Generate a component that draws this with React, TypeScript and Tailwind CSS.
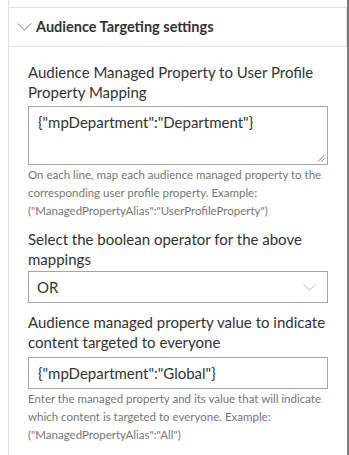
const font = { fontFamily: 'Lato, "Open Sans", sans-serif' }

function Chevron({ className }: { className?: string }) {
  return (
    <svg viewBox="0 0 16 9" className={className} fill="none" stroke="currentColor" strokeWidth="1">
      <path d="M0.5 0.5 L8 8 L15.5 0.5" />
    </svg>
  )
}

function Label({ children }: { children: React.ReactNode }) {
  return <div className="text-[15px] leading-[20px] text-[#333333]">{children}</div>
}

function Help({ children }: { children: React.ReactNode }) {
  return <div className="mt-[1px] text-[11.5px] leading-[18px] text-[#767676]">{children}</div>
}

export default function App() {
  return (
    <div className="flex h-[455px] w-[349px] bg-white" style={font}>
      <div className="ml-[8px] flex flex-1 flex-col border-l border-[#e1e1e1] pt-[7px]">
        <div className="flex h-[40px] items-center border-y border-r border-[#e1e1e1] pl-[8px]">
          <Chevron className="h-[8px] w-[15px] text-[#666666]" />
          <span className="ml-[4px] text-[14.5px] font-bold text-[#333333]">Audience Targeting settings</span>
        </div>

        <div className="flex flex-col px-[19px] pt-[15px]">
          <Label>Audience Managed Property to User Profile Property Mapping</Label>
          <div className="relative mt-[4px] h-[59px] border border-[#a6a6a6] px-[9px] pt-[4px] text-[15px] text-[#333333]">
            {'{"mpDepartment":"Department"}'}
            <svg viewBox="0 0 8 8" className="absolute bottom-[2px] right-[2px] h-[8px] w-[8px] text-[#888888]" stroke="currentColor" strokeWidth="1">
              <path d="M7.5 1 L1 7.5 M7.5 4.5 L4.5 7.5" />
            </svg>
          </div>
          <Help>
            On each line, map each audience managed property to the corresponding user profile property. Example:
            {' ("ManagedPropertyAlias":"UserProfileProperty")'}
          </Help>

          <div className="mt-[9px]">
            <Label>Select the boolean operator for the above mappings</Label>
          </div>
          <div className="mt-[2px] flex h-[32px] items-center justify-between border border-[#a6a6a6] pl-[8px] pr-[11px] text-[15px] text-[#333333]">
            <span>OR</span>
            <Chevron className="h-[7px] w-[13px] text-[#a6a6a6]" />
          </div>

          <div className="mt-[9px]">
            <Label>Audience managed property value to indicate content targeted to everyone</Label>
          </div>
          <div className="mt-[5px] flex h-[32px] items-center border border-[#a6a6a6] px-[9px] text-[15px] text-[#333333]">
            {'{"mpDepartment":"Global"}'}
          </div>
          <Help>
            Enter the managed property and its value that will indicate which content is targeted to everyone. Example:
            {' ("ManagedPropertyAlias":"All")'}
          </Help>
        </div>
      </div>
      <div className="w-[2px] bg-[#7a7a7a]" />
    </div>
  )
}
